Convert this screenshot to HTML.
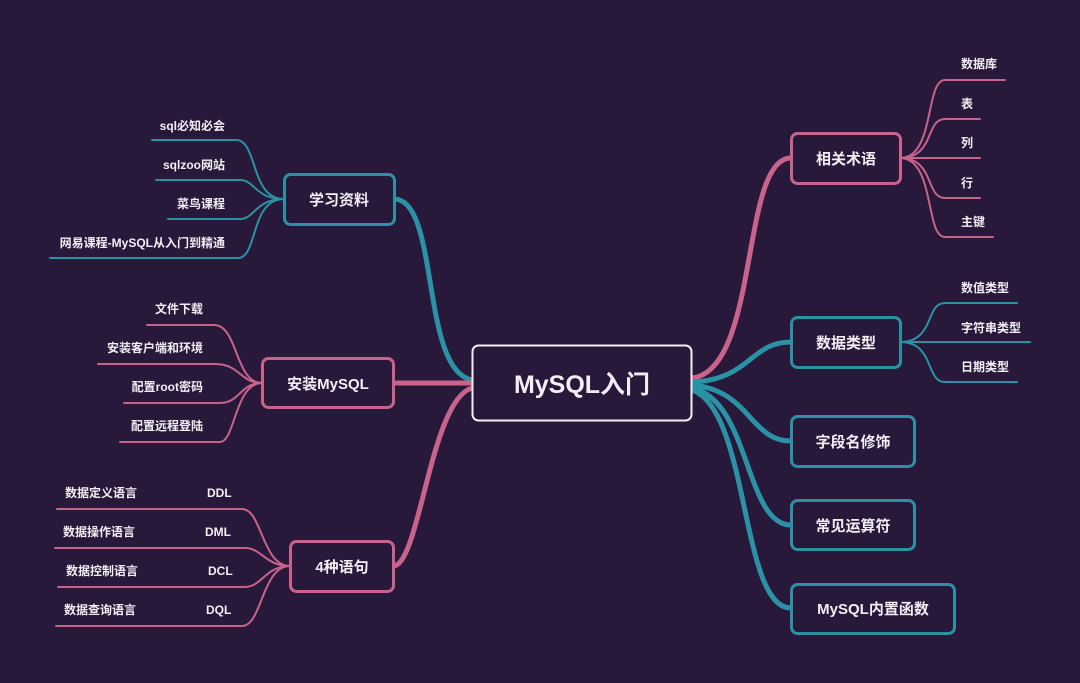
<!DOCTYPE html>
<html><head><meta charset="utf-8"><style>
html,body{margin:0;padding:0;background:#28183a;}
svg{display:block}
text{font-family:"Liberation Sans","Noto Sans CJK SC",sans-serif;fill:#f2eef4;font-weight:bold;}
.s{font-size:12px}
.b{font-size:15px}
</style></head><body>
<svg width="1080" height="683" viewBox="0 0 1080 683" xmlns="http://www.w3.org/2000/svg">
<rect width="1080" height="683" fill="#28183a"/>
<g fill="none" stroke-linecap="round">
<path d="M472,380 C420,370 440,199 394,199" stroke="#2a92a4" stroke-width="5"/>
<path d="M472,383 C440,383 420,383 393,383" stroke="#c8648c" stroke-width="5"/>
<path d="M472,388 C430,400 420,566 393,566" stroke="#c8648c" stroke-width="5"/>
<path d="M692,378 C760,370 740,158 791,158" stroke="#c8648c" stroke-width="5"/>
<path d="M692,382 C750,380 750,342 791,342" stroke="#2a92a4" stroke-width="5"/>
<path d="M692,385 C750,390 750,441 791,441" stroke="#2a92a4" stroke-width="5"/>
<path d="M692,388 C750,400 745,525 791,525" stroke="#2a92a4" stroke-width="5"/>
<path d="M692,390 C750,410 740,608 791,608" stroke="#2a92a4" stroke-width="5"/>
<g stroke="#c8648c" stroke-width="2">
<path d="M900,158 C935,158 925,80 945,80 L1005,80"/>
<path d="M900,158 C935,158 925,119 945,119 L980,119"/>
<path d="M900,158 L980,158"/>
<path d="M900,158 C935,158 925,198 945,198 L980,198"/>
<path d="M900,158 C935,158 925,237 945,237 L993,237"/>
</g>
<g stroke="#2a92a4" stroke-width="2">
<path d="M900,342 C935,342 925,303 945,303 L1017,303"/>
<path d="M900,342 L1030,342"/>
<path d="M900,342 C935,342 925,382 945,382 L1017,382"/>
<path d="M284,199 C250,199 258,140 236,140 L152,140"/>
<path d="M284,199 C255,199 255,180 240,180 L156,180"/>
<path d="M284,199 C255,199 255,219 240,219 L168,219"/>
<path d="M284,199 C250,199 258,258 238,258 L50,258"/>
</g>
<g stroke="#c8648c" stroke-width="2">
<path d="M262,383 C235,383 238,325 214,325 L147,325"/>
<path d="M262,383 C240,383 240,364 215,364 L98,364"/>
<path d="M262,383 C240,383 240,403 220,403 L124,403"/>
<path d="M262,383 C235,383 235,442 220,442 L120,442"/>
<path d="M290,566 C262,566 262,509 242,509 L57,509"/>
<path d="M290,566 C265,566 262,548 245,548 L55,548"/>
<path d="M290,566 C265,566 262,587 245,587 L58,587"/>
<path d="M290,566 C262,566 262,626 242,626 L56,626"/>
</g>
<rect x="472.5" y="345.5" width="219" height="75" rx="6" fill="#28183a" stroke="#f2eef4" stroke-width="2"/>
<rect x="284.5" y="174.5" width="110" height="50" rx="6" fill="#28183a" stroke="#2a92a4" stroke-width="3"/>
<rect x="262.5" y="358.5" width="131" height="49" rx="6" fill="#28183a" stroke="#c8648c" stroke-width="3"/>
<rect x="290.5" y="541.5" width="103" height="50" rx="6" fill="#28183a" stroke="#c8648c" stroke-width="3"/>
<rect x="791.5" y="133.5" width="109" height="50" rx="6" fill="#28183a" stroke="#c8648c" stroke-width="3"/>
<rect x="791.5" y="317.5" width="109" height="50" rx="6" fill="#28183a" stroke="#2a92a4" stroke-width="3"/>
<rect x="791.5" y="416.5" width="123" height="50" rx="6" fill="#28183a" stroke="#2a92a4" stroke-width="3"/>
<rect x="791.5" y="500.5" width="123" height="49" rx="6" fill="#28183a" stroke="#2a92a4" stroke-width="3"/>
<rect x="791.5" y="584.5" width="163" height="49" rx="6" fill="#28183a" stroke="#2a92a4" stroke-width="3"/>
</g>
<text x="582" y="393" font-size="25" text-anchor="middle">MySQL入门</text>
<g class="b" text-anchor="middle">
<text x="339" y="205">学习资料</text>
<text x="328" y="389">安装MySQL</text>
<text x="342" y="572">4种语句</text>
<text x="846" y="164">相关术语</text>
<text x="846" y="348">数据类型</text>
<text x="853" y="447">字段名修饰</text>
<text x="853" y="531">常见运算符</text>
<text x="873" y="614">MySQL内置函数</text>
</g>
<g class="s">
<text x="961" y="68">数据库</text>
<text x="961" y="108">表</text>
<text x="961" y="147">列</text>
<text x="961" y="187">行</text>
<text x="961" y="226">主键</text>
<text x="961" y="292">数值类型</text>
<text x="961" y="332">字符串类型</text>
<text x="961" y="371">日期类型</text>
<text x="65" y="497">数据定义语言</text>
<text x="63" y="536">数据操作语言</text>
<text x="66" y="575">数据控制语言</text>
<text x="64" y="614">数据查询语言</text>
<text x="207" y="497">DDL</text>
<text x="205" y="536">DML</text>
<text x="208" y="575">DCL</text>
<text x="206" y="614">DQL</text>
</g>
<g class="s" text-anchor="end">
<text x="225" y="130">sql必知必会</text>
<text x="225" y="169">sqlzoo网站</text>
<text x="225" y="208">菜鸟课程</text>
<text x="225" y="247">网易课程-MySQL从入门到精通</text>
<text x="203" y="313">文件下载</text>
<text x="203" y="352">安装客户端和环境</text>
<text x="203" y="391">配置root密码</text>
<text x="203" y="430">配置远程登陆</text>
</g>
</svg>
</body></html>
